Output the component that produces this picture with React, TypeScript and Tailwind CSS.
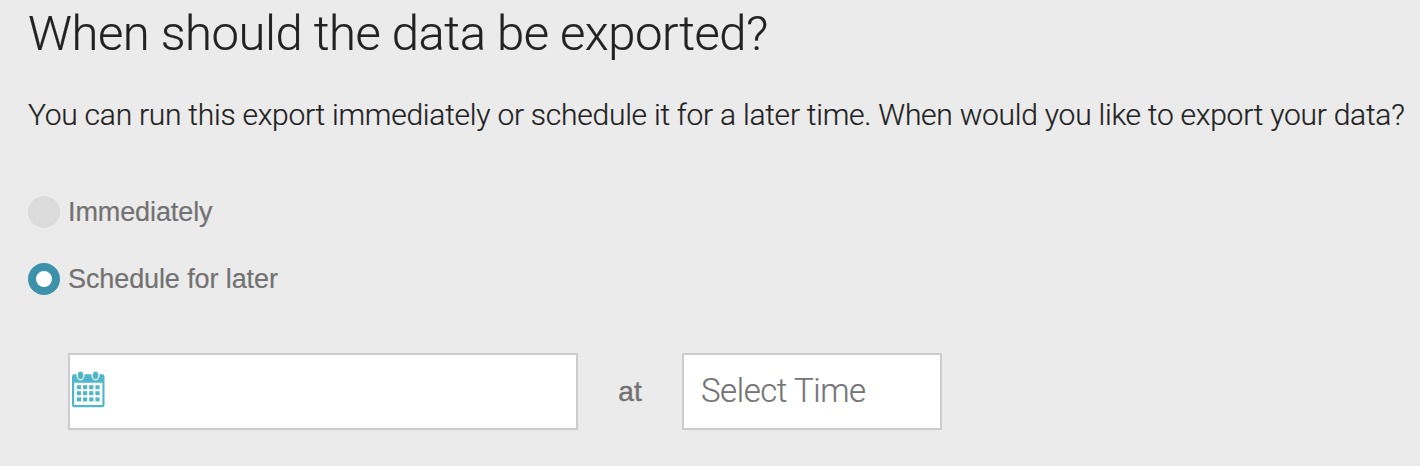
const columns = [4.8, 11, 17.2, 23.4];
const rows = [14.2, 20.2, 26.4];

const CalendarIcon = () => (
  <svg width="34" height="38" viewBox="0 0 34 38" fill="none">
    <path
      fillRule="evenodd"
      clipRule="evenodd"
      d="M2 3.200h28.500a2 2 0 0 1 2 2V34a2.200 2.200 0 0 1-2.200 2.200H2.200A2.200 2.200 0 0 1 0 34V5.200a2 2 0 0 1 2-2zM2.200 11.800v22.200h28.200V11.800z"
      fill="#4fb7c9"
    />
    {rows.map((y) =>
      columns.map((x) => <rect key={`${x}-${y}`} x={x} y={y} width="4.200" height="4" fill="#4fb7c9" />)
    )}
    <ellipse cx="8.500" cy="4.300" rx="3.400" ry="4.500" fill="#4fb7c9" stroke="#fff" strokeWidth="1.200" />
    <ellipse cx="23.500" cy="4.300" rx="3.400" ry="4.500" fill="#4fb7c9" stroke="#fff" strokeWidth="1.200" />
  </svg>
);

const options = [
  { label: 'Immediately', checked: false },
  { label: 'Schedule for later', checked: true },
];

const App = () => {
  return (
    <div className="h-[466px] overflow-hidden bg-[#ebebeb] pl-7 pt-[5px] font-['Roboto',sans-serif] font-light text-[#222] [-webkit-text-stroke:0.2px]">
      <h1 className="text-[49px] leading-[57px] tracking-[-0.47px] whitespace-nowrap">
        When should the data be exported?
      </h1>
      <p className="mt-[35px] text-[30px] leading-[36px] tracking-[-0.255px] whitespace-nowrap">
        You can run this export immediately or schedule it for a later time. When would you like to export your data?
      </p>

      <div className="mt-[63px] flex flex-col gap-[35px] font-['Liberation_Sans',sans-serif] font-normal text-[#727272]">
        {options.map((option) => (
          <label key={option.label} className="flex h-8 items-center gap-2">
            <span
              className={
                option.checked
                  ? 'size-8 rounded-full border-8 border-[#3d91aa] bg-white'
                  : 'size-8 rounded-full bg-[#dcdcdc]'
              }
            />
            <span className="text-[27px] leading-8 tracking-[-0.1px] [-webkit-text-stroke:0.2px]">
              {option.label}
            </span>
          </label>
        ))}
      </div>

      <div className="mt-[58px] ml-10 flex items-center">
        <div className="flex h-[77px] w-[510px] items-start border-2 border-[#ccc] bg-white pt-4 pl-0.5">
          <CalendarIcon />
        </div>
        <span className="w-[104px] text-center font-['Liberation_Sans',sans-serif] text-[28px] font-normal text-[#727272] [-webkit-text-stroke:0.4px]">
          at
        </span>
        <div className="flex h-[77px] w-[260px] items-center border-2 border-[#ccc] bg-white pb-[2px] pl-[17px] text-[33px] tracking-[-0.45px] text-[#757575]">
          Select Time
        </div>
      </div>
    </div>
  );
};

export default App;
